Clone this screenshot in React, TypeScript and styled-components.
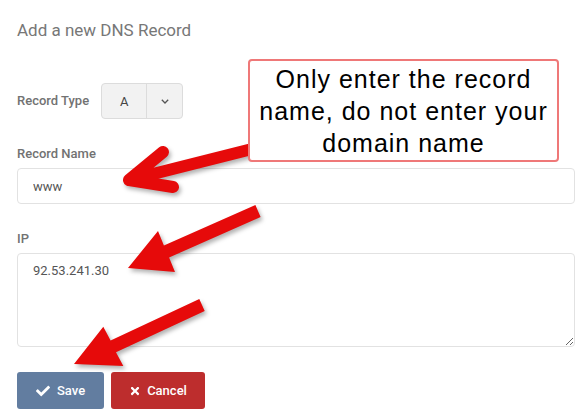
import type { FC } from "react";
import styled, { createGlobalStyle } from "styled-components";
import { FaCheck, FaTimes } from "react-icons/fa";

const GlobalStyle = createGlobalStyle`
  html, body {
    margin: 0;
    background: #fff;
  }
  * {
    box-sizing: border-box;
  }
`;

const App: FC = () => {
  return (
    <>
      <GlobalStyle />
      <Page>
        <Title>Add a new DNS Record</Title>

        <TypeRow>
          <Label>Record Type</Label>
          <SplitSelect>
            <SelectValue>A</SelectValue>
            <SelectCaret>
              <svg width="8" height="5" viewBox="0 0 8 5">
                <polyline points="0.8,0.8 4,4 7.2,0.8" fill="none" stroke="#555" strokeWidth="1.3" />
              </svg>
            </SelectCaret>
          </SplitSelect>
        </TypeRow>

        <Group>
          <Label block>Record Name</Label>
          <Input defaultValue="www" />
        </Group>

        <Group>
          <Label block>IP</Label>
          <TextArea defaultValue="92.53.241.30" />
        </Group>

        <Actions>
          <Button variant="save">
            <FaCheck size={14} />
            Save
          </Button>
          <Button variant="cancel">
            <FaTimes size={12} />
            Cancel
          </Button>
        </Actions>

        <Arrows width="586" height="420" viewBox="0 0 586 420">
          <path
            d="M163 152 L129 180 L173 187 M129 180 L256 148"
            fill="none"
            stroke="#e60a0a"
            strokeWidth="12"
            strokeLinecap="round"
            strokeLinejoin="round"
          />
          <polygon
            points="128,268 158,231 163.9,245.5 255.4,205 260.6,217 169.1,257.5 175,272"
            fill="#e60a0a"
          />
          <polygon
            points="74,364 103.3,326.7 110.6,340.4 199.3,299.1 204.7,310.9 116,352.2 123.3,366"
            fill="#e60a0a"
          />
        </Arrows>

        <Callout>
          Only enter the record
          <br />
          name, do not enter your
          <br />
          domain name
        </Callout>
      </Page>
    </>
  );
};

const Page = styled.div`
  position: relative;
  width: 586px;
  height: 420px;
  padding: 19px 11px 0 17px;
  font-family: Roboto, "Liberation Sans", sans-serif;
  overflow: hidden;
`;

const Title = styled.h3`
  margin: 0;
  font-size: 17px;
  font-weight: 400;
  line-height: 22px;
  color: #777;
`;

const TypeRow = styled.div`
  display: flex;
  align-items: center;
  gap: 12px;
  margin-top: 42px;
`;

const Label = styled.label<{ block?: boolean }>`
  display: ${(p) => (p.block ? "block" : "inline-block")};
  margin-bottom: ${(p) => (p.block ? "5px" : "0")};
  font-size: 13px;
  font-weight: 500;
  line-height: 18px;
  color: #727272;
`;

const SplitSelect = styled.div`
  display: inline-flex;
  height: 36px;
  border: 1px solid #dcdcdc;
  border-radius: 4px;
  background: #f2f2f2;
  overflow: hidden;
`;

const SelectValue = styled.div`
  width: 45px;
  display: flex;
  align-items: center;
  justify-content: center;
  font-size: 13px;
  color: #444;
  border-right: 1px solid #dcdcdc;
`;

const SelectCaret = styled.div`
  width: 35px;
  display: flex;
  align-items: center;
  justify-content: center;
`;

const Group = styled.div`
  margin-top: 26px;
`;

const Input = styled.input`
  display: block;
  width: 100%;
  height: 36px;
  padding: 0 15px;
  border: 1px solid #e2e2e2;
  border-radius: 4px;
  font-family: Roboto, sans-serif;
  font-size: 13px;
  color: #555;
  outline: none;
`;

const TextArea = styled.textarea`
  display: block;
  width: 100%;
  height: 94px;
  padding: 8px 15px;
  border: 1px solid #e2e2e2;
  border-radius: 4px;
  font-family: Roboto, sans-serif;
  font-size: 13px;
  line-height: 18px;
  color: #555;
  outline: none;
`;

const Actions = styled.div`
  display: flex;
  gap: 7px;
  margin-top: 25px;
`;

const Button = styled.button<{ variant: "save" | "cancel" }>`
  display: inline-flex;
  align-items: center;
  gap: ${(p) => (p.variant === "save" ? "7px" : "6px")};
  height: 37px;
  padding: 0 ${(p) => (p.variant === "save" ? "19px" : "18px")};
  border: none;
  border-radius: 3px;
  background: ${(p) => (p.variant === "save" ? "#627da0" : "#bd2d2d")};
  color: #fff;
  font-family: Roboto, sans-serif;
  font-size: 13px;
  font-weight: 500;
`;

const Arrows = styled.svg`
  position: absolute;
  top: 0;
  left: 0;
  pointer-events: none;
  filter: drop-shadow(2px 3px 2px rgba(0, 0, 0, 0.3));
`;

const Callout = styled.div`
  position: absolute;
  top: 59px;
  left: 248px;
  width: 311px;
  height: 103px;
  padding-top: 2px;
  border: 2px solid #ef7878;
  border-radius: 4px;
  background: #fff;
  font-family: "Liberation Sans", Arial, sans-serif;
  font-size: 25px;
  letter-spacing: 1px;
  line-height: 32px;
  text-align: center;
  color: #000;
`;

export default App;
